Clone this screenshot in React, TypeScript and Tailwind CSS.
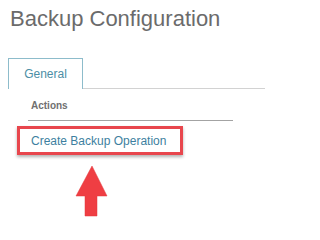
export default function App() {
  return (
    <div className="w-[265px] h-[221px] bg-white overflow-hidden font-['Liberation_Sans',Arial,sans-serif]">
      <h1 className="pt-[5px] pl-[10px] text-[22px] leading-[28px] font-normal text-[#6b6b6b]">
        Backup Configuration
      </h1>

      <div className="mt-[25px] flex items-end pl-[8px]">
        <div className="w-[75px] h-[31px] border border-b-0 border-[#8dbccb] flex items-center justify-center text-[12px] text-[#4c8ea5]">
          General
        </div>
        <div className="flex-1 border-b border-[#d2d2d2]" />
      </div>

      <div className="mt-[11px] ml-[28px] w-[205px] border-b border-[#a3a3a3] pb-[8px] pl-[3px] text-[10px] leading-[12px] font-bold text-[#707070]">
        Actions
      </div>

      <div className="mt-[5px] ml-[17px] w-[166px] h-[29px] border-[3px] border-[#e8464d] shadow-[0_2px_3px_rgba(0,0,0,0.3)] flex items-center pl-[11px]">
        <a className="text-[12px] text-[#3d7fa0] leading-none">Create Backup Operation</a>
      </div>

      <svg className="mt-[9px] ml-[74px] block" width="36" height="56" viewBox="0 0 36 56">
        <path
          d="M18 2 L33 32 L23 32 L23 52 L11 52 L11 32 L2 32 Z"
          fill="#ef3e43"
          stroke="#e23a3f"
          strokeWidth="0.5"
          strokeLinejoin="round"
        />
      </svg>
    </div>
  );
}
